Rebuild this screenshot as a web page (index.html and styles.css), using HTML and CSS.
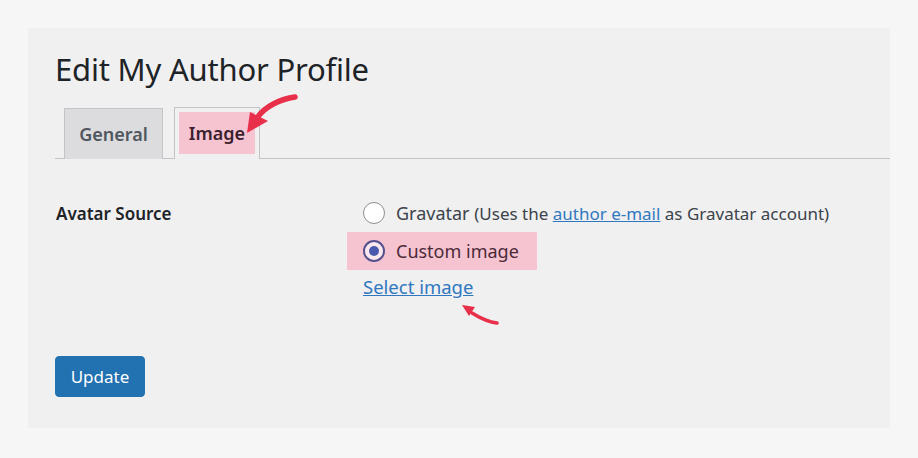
FILE: index.html
```html
<!DOCTYPE html>
<html lang="en">
<head>
<meta charset="utf-8">
<title>Edit My Author Profile</title>
<link rel="stylesheet" href="styles.css">
</head>
<body>
<div class="panel">
  <h1 class="title">Edit My Author Profile</h1>
  <div class="tabs">
    <a class="tab tab-general">General</a>
    <a class="tab tab-active"><span class="hl">Image</span></a>
    <svg class="arrow arrow-tab" width="60" height="45" viewBox="0 0 60 45">
      <path d="M54 6 C40 8 24 15 16 27" fill="none" stroke="#e8304a" stroke-width="5.5" stroke-linecap="round"/>
      <path d="M6 42 L9 21 L27 30 Z" fill="#e8304a"/>
    </svg>
  </div>
  <div class="row">
    <div class="label">Avatar Source</div>
    <div class="controls">
      <label class="opt">
        <span class="radio"></span>
        <span class="opt-text">Gravatar <small>(Uses the <a class="link">author e-mail</a> as Gravatar account)</small></span>
      </label>
      <label class="opt opt-checked">
        <span class="radio checked"></span>
        <span class="opt-text">Custom image</span>
      </label>
      <a class="link select">Select image</a>
      <svg class="arrow arrow-select" width="44" height="26" viewBox="0 0 44 26">
        <path d="M39 22 C30 21 22 17 14 12" fill="none" stroke="#e8304a" stroke-width="3.5" stroke-linecap="round"/>
        <path d="M4 4 L17 6 L11 15 Z" fill="#e8304a"/>
      </svg>
    </div>
  </div>
  <button class="btn">Update</button>
</div>
</body>
</html>
```
FILE: styles.css
```css
* { box-sizing: border-box; }
html, body { margin: 0; }
body {
  background: #f6f6f6;
  padding: 28px 28px 30px 28px;
  font-family: "Noto Sans", "Open Sans", sans-serif;
  color: #1d2327;
}
.panel {
  background: #f0f0f1;
  height: 400px;
  padding: 0 0 0 27px;
  position: relative;
  display: flex;
  flex-direction: column;
}
.title {
  margin: 20px 0 0 0;
  font-weight: 400;
  font-size: 31px;
  line-height: 42px;
  color: #1d2327;
  letter-spacing: -0.2px;
}
.tabs {
  margin-top: 18px;
  height: 51px;
  border-bottom: 1px solid #c3c4c7;
  display: flex;
  align-items: flex-end;
  padding-left: 9px;
  gap: 11px;
  position: relative;
}
.tab {
  height: 51px;
  border: 1px solid #c3c4c7;
  border-bottom: none;
  font-size: 18px;
  font-weight: 600;
  display: flex;
  align-items: center;
  justify-content: center;
  margin-bottom: -1px;
}
.tab-general {
  width: 99px;
  background: #dcdcde;
  color: #50575e;
}
.tab-active {
  width: 86px;
  background: #f0f0f1;
  height: 52px;
  padding: 4px 4px 5px 4px;
  align-items: stretch;
}
.hl {
  flex: 1;
  background: #f6c4d1;
  color: #3b1f2e;
  display: flex;
  align-items: center;
  justify-content: center;
}
.arrow { position: absolute; }
.arrow-tab { left: 186px; top: -17px; }
.row {
  display: flex;
  margin-top: 43px;
}
.label {
  width: 308px;
  padding-left: 1px;
  font-size: 17px;
  font-weight: 600;
  line-height: 24px;
  color: #1d2327;
}
.controls {
  display: flex;
  flex-direction: column;
  align-items: flex-start;
  position: relative;
}
.opt {
  display: flex;
  align-items: center;
  gap: 11px;
  height: 38px;
  padding: 0 18px 0 16px;
  margin-left: -16px;
  color: #3c434a;
  font-size: 18px;
}
.opt:first-child { margin-top: -8px; }
.opt small { font-size: 17px; }
.opt-checked {
  background: #f6c4d1;
  color: #4a2a38;
}
.radio {
  width: 22px;
  height: 22px;
  border-radius: 50%;
  border: 1px solid #8c8f94;
  background: #fff;
  flex: none;
  display: flex;
  align-items: center;
  justify-content: center;
}
.radio.checked {
  border: 2px solid #55508f;
  background: #fbe9ef;
}
.radio.checked::after {
  content: "";
  width: 10px;
  height: 10px;
  border-radius: 50%;
  background: #4a5aae;
}
.link {
  color: #2f78c0;
  text-decoration: underline;
}
.select {
  font-size: 18.5px;
  line-height: 24px;
  margin-top: 5px;
}
.arrow-select { left: 95px; top: 99px; }
.btn {
  margin-top: 57px;
  align-self: flex-start;
  width: 90px;
  height: 41px;
  background: #2271b1;
  border: 1px solid #2271b1;
  border-radius: 4px;
  color: #fff;
  font-family: inherit;
  font-size: 17px;
  padding: 0;
}
```
